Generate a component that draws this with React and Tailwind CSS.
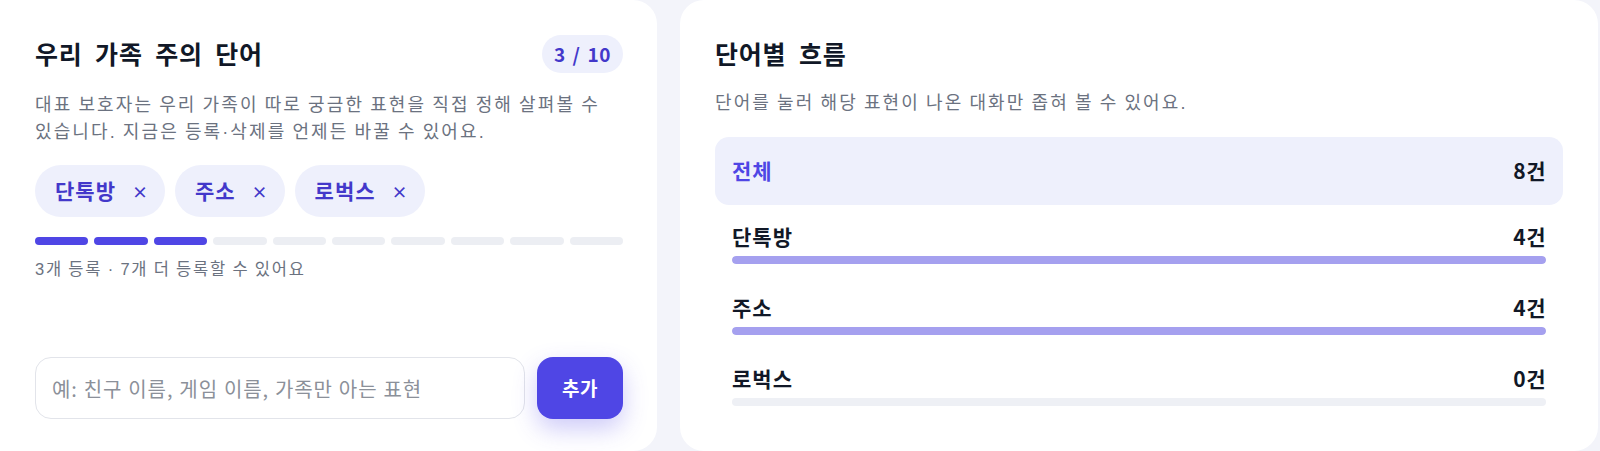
import React from 'react';

const words = [
  { label: '단톡방', count: 4 },
  { label: '주소', count: 4 },
  { label: '로벅스', count: 0 },
];

const total = 8;
const limit = 10;

function Chip({ children }) {
  return (
    <span className="flex h-[52px] items-center rounded-full bg-[#eef0fc] pl-5 pr-[19px] text-[21px] font-bold tracking-[1px] text-[#4338ca]">
      {children}
      <button type="button" className="ml-[16px] w-[14px] text-center text-[16px] font-bold leading-none tracking-normal text-[#4338ca]">
        ×
      </button>
    </span>
  );
}

function WordRow({ label, count }) {
  const pct = total ? (count / total) * 200 : 0;
  return (
    <button type="button" className="flex w-full flex-col px-[17px] pt-[14px] pb-[12px] text-left">
      <div className="flex w-full items-center justify-between text-[21px] font-bold leading-7 tracking-[1px] text-[#111827]">
        <span>{label}</span>
        <span className="tracking-[0.5px]">{count}건</span>
      </div>
      <div className="mt-[6px] h-[8px] w-full overflow-hidden rounded-full bg-[#eef0f5]">
        <div className="h-full rounded-full bg-[#a5a0ef]" style={{ width: `${Math.min(pct, 100)}%` }} />
      </div>
    </button>
  );
}

export default function App() {
  const used = words.length;
  return (
    <div className="flex h-[451px] w-[1600px] gap-[23px] bg-[#f3f4fa] pr-[2px] font-['Noto_Sans_CJK_KR',sans-serif]">
      <section className="flex w-[657px] shrink-0 flex-col rounded-r-[24px] bg-white pt-[35px] pr-[34px] pb-[32px] pl-[35px]">
        <div className="flex min-h-[38px] items-center justify-between">
          <h2 className="text-[25px] font-bold tracking-[0.8px] text-[#111827] [word-spacing:6px]">우리 가족 주의 단어</h2>
          <span className="flex h-[38px] w-[81px] items-center justify-center rounded-full bg-[#eef0fc] text-[19px] font-bold tracking-[0.6px] text-[#4338ca] [word-spacing:2px]">
            {used} / {limit}
          </span>
        </div>
        <p className="mt-[19px] break-keep font-['Liberation_Sans','Noto_Sans_CJK_KR',sans-serif] text-[18px] leading-[26.5px] tracking-[2.1px] text-[#6b7280] [word-spacing:-1px]">
          대표 보호자는 우리 가족이 따로 궁금한 표현을 직접 정해 살펴볼 수 있습니다. 지금은 등록·삭제를 언제든 바꿀 수 있어요.
        </p>
        <div className="mt-5 flex gap-[10px]">
          {words.map((w) => (
            <Chip key={w.label}>{w.label}</Chip>
          ))}
        </div>
        <div className="mt-5 flex gap-[6px]">
          {Array.from({ length: limit }, (_, i) => (
            <div key={i} className={i < used ? 'h-[8px] flex-1 rounded-full bg-[#4f46e5]' : 'h-[8px] flex-1 rounded-full bg-[#eceef3]'} />
          ))}
        </div>
        <p className="mt-3 font-['Liberation_Sans','Noto_Sans_CJK_KR',sans-serif] text-[16.5px] tracking-[1.8px] text-[#6b7280] [word-spacing:-1px]">
          {used}개 등록 · {limit - used}개 더 등록할 수 있어요
        </p>
        <div className="mt-auto flex gap-3">
          <input
            type="text"
            placeholder="예: 친구 이름, 게임 이름, 가족만 아는 표현"
            className="h-[62px] min-w-0 flex-1 rounded-2xl border-[1.5px] border-[#e2e4ea] bg-white px-4 text-[20px] tracking-[0.9px] text-[#111827] outline-none [word-spacing:0.6px] placeholder:text-[#8b9099]"
          />
          <button
            type="button"
            className="h-[62px] w-[86px] shrink-0 rounded-2xl bg-[#4f46e5] text-[19px] font-bold tracking-[0.5px] text-white shadow-[0_10px_24px_rgba(79,70,229,0.28)]"
          >
            추가
          </button>
        </div>
      </section>

      <section className="flex flex-1 flex-col rounded-[24px] bg-white px-[35px] pt-[35px]">
        <div className="flex min-h-[38px] items-center">
          <h2 className="text-[25px] font-bold tracking-[0.8px] text-[#111827] [word-spacing:6px]">단어별 흐름</h2>
        </div>
        <p className="mt-[17px] break-keep font-['Liberation_Sans','Noto_Sans_CJK_KR',sans-serif] text-[18px] leading-[26.5px] tracking-[2.1px] text-[#6b7280] [word-spacing:-1px]">
          단어를 눌러 해당 표현이 나온 대화만 좁혀 볼 수 있어요.
        </p>
        <div className="mt-5 flex flex-col gap-[3px]">
          <button
            type="button"
            className="flex h-[68px] w-full items-center justify-between rounded-[14px] bg-[#eef0fc] px-[17px] text-[21px] font-bold tracking-[1px]"
          >
            <span className="text-[#4f46e5]">전체</span>
            <span className="tracking-[0.5px] text-[#111827]">{total}건</span>
          </button>
          {words.map((w) => (
            <WordRow key={w.label} {...w} />
          ))}
        </div>
      </section>
    </div>
  );
}
